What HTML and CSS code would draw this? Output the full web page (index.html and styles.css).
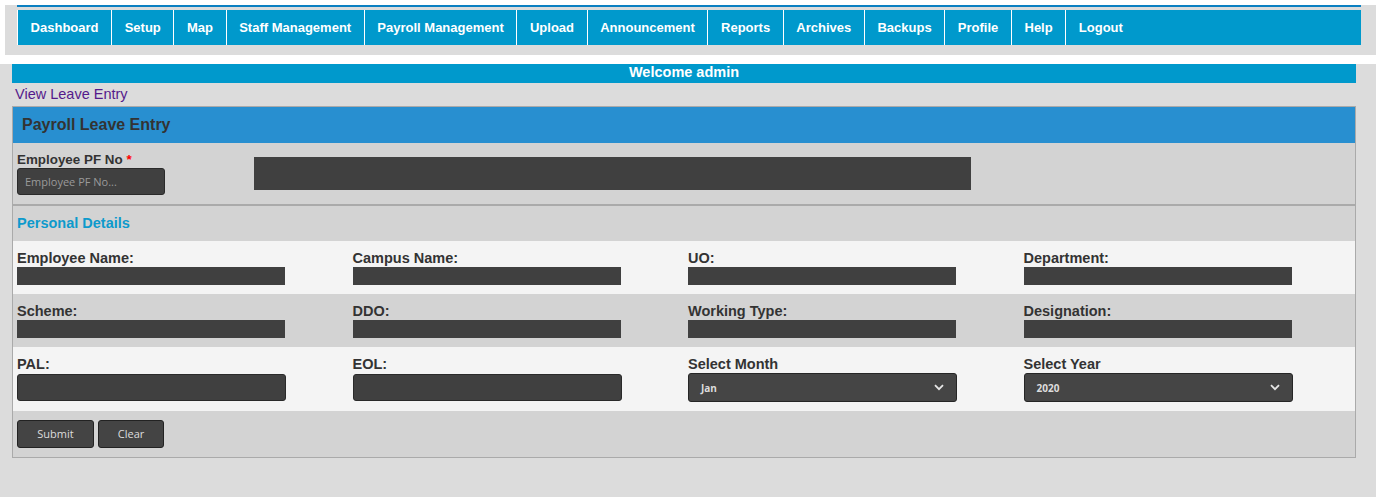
FILE: index.html
```html
<!DOCTYPE html>
<html>
<head>
<meta charset="utf-8">
<title>Payroll Leave Entry</title>
<link rel="stylesheet" href="styles.css">
</head>
<body>
<div class="topbar">
  <div class="navwrap">
    <ul class="nav">
      <li><a href="#">Dashboard</a></li>
      <li><a href="#">Setup</a></li>
      <li><a href="#">Map</a></li>
      <li><a href="#">Staff Management</a></li>
      <li><a href="#">Payroll Management</a></li>
      <li><a href="#">Upload</a></li>
      <li><a href="#">Announcement</a></li>
      <li><a href="#">Reports</a></li>
      <li><a href="#">Archives</a></li>
      <li><a href="#">Backups</a></li>
      <li><a href="#">Profile</a></li>
      <li><a href="#">Help</a></li>
      <li><a href="#">Logout</a></li>
    </ul>
  </div>
</div>
<div class="main">
  <div class="welcome">Welcome admin</div>
  <div class="linkrow"><a class="viewlink" href="#">View Leave Entry</a></div>
  <div class="panel">
    <div class="panel-head">Payroll Leave Entry</div>
    <div class="pf-row">
      <div class="pf-field">
        <label class="lbl pf-lbl">Employee PF No <span class="req">*</span></label>
        <input class="pf-input" type="text" placeholder="Employee PF No...">
      </div>
      <div class="pf-box"></div>
    </div>
    <div class="section-title">Personal Details</div>
    <div class="grid-row light">
      <div class="cell"><div class="lbl">Employee Name:</div><div class="bar"></div></div>
      <div class="cell"><div class="lbl">Campus Name:</div><div class="bar"></div></div>
      <div class="cell"><div class="lbl">UO:</div><div class="bar"></div></div>
      <div class="cell"><div class="lbl">Department:</div><div class="bar"></div></div>
    </div>
    <div class="grid-row dark">
      <div class="cell"><div class="lbl">Scheme:</div><div class="bar"></div></div>
      <div class="cell"><div class="lbl">DDO:</div><div class="bar"></div></div>
      <div class="cell"><div class="lbl">Working Type:</div><div class="bar"></div></div>
      <div class="cell"><div class="lbl">Designation:</div><div class="bar"></div></div>
    </div>
    <div class="grid-row light">
      <div class="cell"><div class="lbl">PAL:</div><input class="txt" type="text"></div>
      <div class="cell"><div class="lbl">EOL:</div><input class="txt" type="text"></div>
      <div class="cell"><div class="lbl">Select Month</div>
        <div class="select"><span>Jan</span>
          <svg class="chev" width="10" height="7" viewBox="0 0 10 7"><path d="M1 1.2 L5 5.2 L9 1.2" fill="none" stroke="#e6e6e6" stroke-width="1.8"/></svg>
        </div>
      </div>
      <div class="cell"><div class="lbl">Select Year</div>
        <div class="select"><span>2020</span>
          <svg class="chev" width="10" height="7" viewBox="0 0 10 7"><path d="M1 1.2 L5 5.2 L9 1.2" fill="none" stroke="#e6e6e6" stroke-width="1.8"/></svg>
        </div>
      </div>
    </div>
    <div class="btn-row">
      <button class="btn btn-submit">Submit</button>
      <button class="btn btn-clear">Clear</button>
    </div>
  </div>
</div>
</body>
</html>
```
FILE: styles.css
```css
html, body {
  margin: 0;
  padding: 0;
  background: #ffffff;
  font-family: "Liberation Sans", Arial, sans-serif;
}
.topbar {
  margin: 5px 0 0 5px;
  background: #dcdcdc;
  padding: 0 15px 10px 12px;
}
.navwrap {
  border-top: 2px solid #0a7fc1;
  padding-top: 3px;
}
.nav {
  list-style: none;
  margin: 0;
  padding: 0;
  display: flex;
  background: #0099cc;
  height: 35px;
}
.nav li a {
  display: block;
  border-left: 1px solid #ffffff;
  padding: 0 12.6px;
  line-height: 35px;
  color: #ffffff;
  font-weight: bold;
  font-size: 13px;
  text-decoration: none;
}
.main {
  margin-top: 9px;
  background: #dcdcdc;
  padding: 0 20px 0 12px;
  min-height: 433px;
}
.welcome {
  background: #0099cc;
  color: #ffffff;
  font-weight: bold;
  font-size: 14.5px;
  height: 19px;
  line-height: 17px;
  text-align: center;
}
.linkrow {
  height: 23px;
  padding-left: 3px;
  line-height: 22px;
}
.viewlink {
  color: #551a8b;
  text-decoration: none;
  font-size: 14.5px;
}
.panel {
  border: 1px solid #aaaaaa;
  background: #d3d3d3;
}
.panel-head {
  background: #288fd0;
  color: #333333;
  font-weight: bold;
  font-size: 16px;
  height: 36px;
  line-height: 36px;
  padding-left: 9px;
}
.pf-row {
  display: flex;
  height: 61px;
  border-bottom: 2px solid #aaaaaa;
  background: #d3d3d3;
}
.pf-field {
  width: 237px;
  padding: 9px 0 0 4px;
}
.lbl {
  display: block;
  color: #333333;
  font-weight: bold;
  font-size: 14.5px;
  line-height: 17px;
}
.pf-lbl {
  font-size: 13.4px;
  line-height: 16px;
}
.req {
  color: #ff0000;
}
.pf-input {
  display: block;
  box-sizing: border-box;
  margin: 0;
  width: 148px;
  height: 27px;
  background: #404040;
  border: 1px solid #2a2a2a;
  border-radius: 3px;
  padding: 0 7px;
  font-family: "Open Sans", sans-serif;
  font-size: 11px;
  color: #dddddd;
  outline: none;
}
.pf-input::placeholder {
  color: #9a9a9a;
}
.pf-box {
  margin-top: 14px;
  width: 717px;
  height: 33px;
  background: #404040;
}
.section-title {
  height: 35px;
  line-height: 34px;
  padding-left: 4px;
  color: #0d9acc;
  font-weight: bold;
  font-size: 14.5px;
}
.grid-row {
  display: grid;
  grid-template-columns: repeat(4, 1fr);
  padding: 9px 0;
}
.grid-row.light {
  background: #f4f4f4;
}
.grid-row.dark {
  background: #d3d3d3;
}
.cell {
  padding-left: 4px;
}
.bar {
  margin-top: 0;
  width: 268px;
  height: 18px;
  background: #404040;
}
.txt {
  display: block;
  box-sizing: border-box;
  margin: 1px 0 0 0;
  width: 269px;
  height: 27px;
  background: #404040;
  border: 1px solid #2a2a2a;
  border-radius: 3px;
  outline: none;
}
.select {
  box-sizing: border-box;
  margin-top: 0;
  width: 269px;
  height: 29px;
  background: #454545;
  border: 1px solid #262626;
  border-radius: 3px;
  display: flex;
  align-items: center;
  justify-content: space-between;
  padding: 0 12px 0 12px;
  font-family: "Open Sans", sans-serif;
  font-weight: bold;
  font-size: 10px;
  color: #dddddd;
}
.chev {
  display: block;
}
.btn-row {
  display: flex;
  gap: 4px;
  padding: 9px 4px 9px 4px;
  background: #d3d3d3;
}
.btn {
  box-sizing: border-box;
  height: 28px;
  background: #444444;
  border: 1px solid #222222;
  border-radius: 3px;
  color: #dddddd;
  font-family: "Open Sans", sans-serif;
  font-size: 11px;
  padding: 0 0 1px 0;
}
.btn-submit {
  width: 77px;
}
.btn-clear {
  width: 66px;
}
```
